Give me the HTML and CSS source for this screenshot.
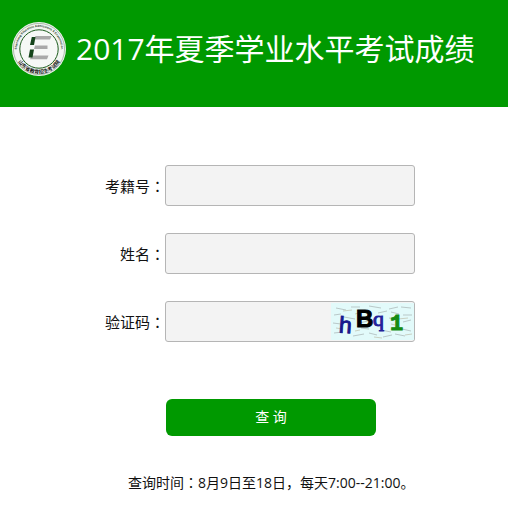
FILE: index.html
```html
<!DOCTYPE html>
<html lang="zh-CN">
<head>
  <meta charset="UTF-8">
  <meta name="viewport" content="width=device-width, initial-scale=1.0">
  <title>2017年夏季学业水平考试成绩</title>
  <link rel="stylesheet" href="styles.css">
</head>
<body>
  <header class="header">
    <svg class="logo" viewBox="0 0 54 54" aria-hidden="true">
      <defs>
        <path id="arc-top" d="M8.900 39.700A22.100 22.100 0 1 1 45.100 39.700" />
        <path id="arc-bottom" d="M3 32A24.500 24.500 0 0 0 51 32" />
      </defs>
      <circle cx="27" cy="27" r="27" fill="#f1f5f1" />
      <circle cx="27" cy="27" r="25.6" fill="none" stroke="#7d967d" stroke-width="0.6" />
      <circle cx="27" cy="27" r="19.200" fill="#f6f8f6" stroke="#1d5c1d" stroke-width="1" />
      <text class="logo-en"><textPath href="#arc-top" startOffset="50%">Shandong Education Admissions &amp; Examination</textPath></text>
      <text class="logo-cn"><textPath href="#arc-bottom" startOffset="50%">山东省教育招生考试院</textPath></text>
      <path d="M23.500 14h16l-1.500 3.500H22zM23 23.500h12.500v3.500H22zM19.500 33.500h17l-1.500 3.800H18z" fill="#a9a9a9" />
      <path d="M19.800 15h3.700l-1.500 8h-4zM18 27.500h4l-1.500 8h-4z" fill="#16451b" />
    </svg>
    <h1>2017年夏季学业水平考试成绩</h1>
  </header>

  <form class="query">
    <div class="row">
      <label for="kaoji">考籍号<span class="colon" lang="ja">：</span></label>
      <input type="text" id="kaoji">
    </div>
    <div class="row">
      <label for="name">姓名<span class="colon" lang="ja">：</span></label>
      <input type="text" id="name">
    </div>
    <div class="row">
      <label for="code">验证码<span class="colon" lang="ja">：</span></label>
      <div class="code-box">
        <input type="text" id="code">
        <svg class="captcha" viewBox="0 0 83 37" role="img" aria-label="验证码图片">
          <rect width="83" height="37" fill="#e2fafa" />
          <path d="M5 5l10 2M20 4h9M38 3l12 2M58 6l9-2M70 4l10 1M3 12l7-1M13 14l11 2M47 10l9-2M60 9l8 2M72 12h9M2 20l8 1M28 20l9-2M50 27l10 2M72 19l8-2M3 30l9-1M22 33l11-2M38 30l8 2M52 34l9-2M64 31l10 2M71 26l9 2M30 25l8 1M58 15l5 1" fill="none" stroke="#b9c8c8" stroke-width="1" />
          <path d="M12 8l9-1M31 9l-7 2M43 34l8 1M67 16l10-1M5 25l7 1M24 28l5-1M74 32l7-1M60 21l4 1" fill="none" stroke="#c8d0c2" stroke-width="1" />
          <text x="8" y="30" class="ch ch-h" transform="rotate(4 14 24)">h</text>
          <text x="25" y="24" class="ch ch-b">B</text>
          <text x="42" y="23" class="ch ch-q">q</text>
          <text x="59" y="27" class="ch ch-1">1</text>
        </svg>
      </div>
    </div>
    <button type="submit">查 询</button>
  </form>

  <p class="note">查询时间<span class="colon" lang="ja">：</span>8月9日至18日，每天7:00--21:00。</p>
</body>
</html>
```

FILE: styles.css
```css
* {
  box-sizing: border-box;
}
body {
  margin: 0;
  background: #fff;
  color: #111;
  font-family: "Open Sans", "Noto Sans CJK SC", sans-serif;
  font-size: 15px;
}
.header {
  display: flex;
  align-items: flex-start;
  gap: 10px;
  padding: 22px 12px 31px;
  background: #090;
}
.logo {
  flex: none;
  width: 54px;
  height: 54px;
}
.logo-en {
  font-family: "Liberation Sans", Arial, sans-serif;
  font-size: 3px;
  font-weight: bold;
  fill: #263a26;
  text-anchor: middle;
}
.logo-cn {
  font-size: 5px;
  font-weight: bold;
  fill: #111;
  text-anchor: middle;
}
h1 {
  margin: 0;
  color: #fff;
  font-size: 30px;
  font-weight: normal;
  line-height: 54px;
  white-space: nowrap;
}
.query {
  padding-top: 58px;
}
.row {
  display: flex;
  align-items: center;
  margin-bottom: 27px;
}
.row label {
  flex: none;
  width: 165px;
  text-align: right;
}
.colon {
  font-family: "Noto Sans CJK JP", sans-serif;
  line-height: 1;
}
input {
  width: 250px;
  height: 41px;
  padding: 0 10px;
  border: 1px solid #b5b5b5;
  border-radius: 3px;
  background: #f3f3f3;
  font: inherit;
}
.code-box {
  position: relative;
}
.code-box input {
  display: block;
  padding-right: 90px;
}
/* captcha sits inside the right end of the box */
.captcha {
  position: absolute;
  top: 2px;
  right: 1px;
  width: 83px;
  height: 37px;
}
.ch {
  font-family: "Liberation Sans", Arial, sans-serif;
  font-weight: bold;
}
.ch-h {
  font-size: 23px;
  font-weight: normal;
  fill: #17178c;
  stroke: #17178c;
}
.ch-b {
  font-size: 24px;
  fill: #000;
  stroke: #000;
}
.ch-q {
  font-family: "Liberation Serif", serif;
  font-size: 22px;
  font-weight: normal;
  fill: #22229a;
  stroke: #22229a;
}
.ch-1 {
  font-family: "Liberation Mono", monospace;
  font-size: 22px;
  fill: #148c14;
  stroke: #148c14;
}
button {
  display: block;
  width: 210px;
  height: 37px;
  margin: 57px 0 0 166px;
  padding: 0 0 3px;
  border: 0;
  border-radius: 6px;
  background: #090;
  color: #fff;
  font: inherit;
  font-size: 14px;
}
.note {
  margin: 37px 0 20px 128px;
  font-family: "Open Sans", "Noto Sans CJK SC", sans-serif;
  font-size: 14px;
  line-height: 20px;
}
```
